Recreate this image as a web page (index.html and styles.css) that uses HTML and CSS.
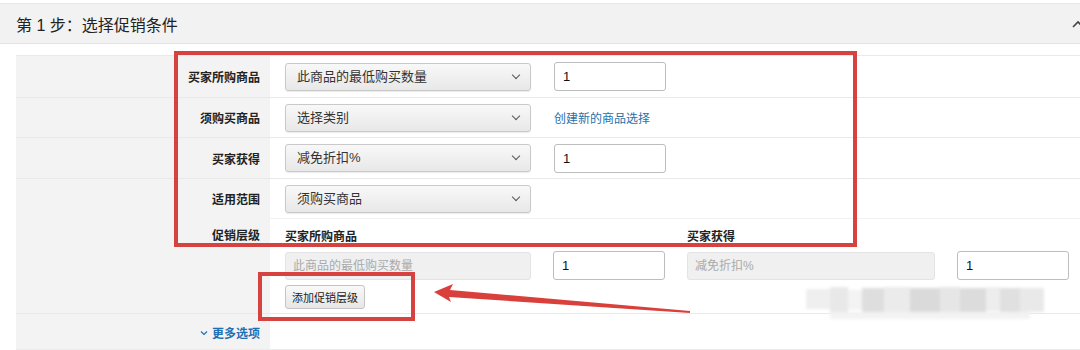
FILE: index.html
```html
<!DOCTYPE html>
<html lang="zh-CN">

<head>
    <meta charset="UTF-8">
    <meta name="viewport" content="width=device-width, initial-scale=1.0">
    <title>选择促销条件</title>
    <link rel="stylesheet" href="styles.css">
</head>

<body>
    <div class="step">
        <div class="step-head">
            <span>第 1 步：选择促销条件</span>
            <svg class="caret" width="12" height="10" viewBox="0 0 12 10">
                <path d="M1 8 L6 3 L11 8" fill="none" stroke="#444" stroke-width="1.6"/>
            </svg>
        </div>

        <div class="form">
            <div class="row r1">
                <div class="label">买家所购商品</div>
                <div class="field">
                    <div class="select">此商品的最低购买数量</div>
                    <div class="input">1</div>
                </div>
            </div>
            <div class="row r2">
                <div class="label">须购买商品</div>
                <div class="field">
                    <div class="select">选择类别</div>
                    <a class="link" href="#">创建新的商品选择</a>
                </div>
            </div>
            <div class="row r3">
                <div class="label">买家获得</div>
                <div class="field">
                    <div class="select">减免折扣%</div>
                    <div class="input">1</div>
                </div>
            </div>
            <div class="row r4">
                <div class="label">适用范围</div>
                <div class="field">
                    <div class="select">须购买商品</div>
                </div>
            </div>
            <div class="row r5">
                <div class="label top">促销层级</div>
                <div class="tiers">
                    <div class="tier-head">买家所购商品</div>
                    <div></div>
                    <div class="tier-head">买家获得</div>
                    <div></div>
                    <div class="disabled">此商品的最低购买数量</div>
                    <div class="input">1</div>
                    <div class="disabled">减免折扣%</div>
                    <div class="input">1</div>
                    <div class="btn-cell"><button class="btn">添加促销层级</button></div>
                </div>
            </div>
            <div class="row r6">
                <div class="label more">
                    <svg width="8" height="6" viewBox="0 0 8 6">
                        <path d="M1 1.5 L4 4.5 L7 1.5" fill="none" stroke="#1f6fb5" stroke-width="1.2"/>
                    </svg>
                    更多选项
                </div>
                <div class="field"></div>
            </div>
        </div>
    </div>

    <!-- annotations drawn on top of the screenshot -->
    <svg class="marks" width="1080" height="350" viewBox="0 0 1080 350">
        <defs>
            <filter id="soft"><feGaussianBlur stdDeviation="1.5"/></filter>
        </defs>
        <rect x="176" y="53" width="679" height="192" fill="none" stroke="#d5423f" stroke-width="4"/>
        <rect x="260" y="274" width="153" height="45" fill="none" stroke="#d5423f" stroke-width="4"/>
        <polygon points="434,292 453,284 450,290 690,311 690,313 449,297 451,302" fill="#d9403c"/>
        <g filter="url(#soft)">
            <rect x="806" y="289" width="24" height="20" fill="#efefef"/>
            <rect x="830" y="287" width="18" height="26" fill="#e8e8e8"/>
            <rect x="848" y="290" width="14" height="20" fill="#f3f3f3"/>
            <rect x="862" y="288" width="22" height="24" fill="#dedede"/>
            <rect x="884" y="287" width="26" height="26" fill="#ebebeb"/>
            <rect x="910" y="288" width="30" height="24" fill="#dadada"/>
            <rect x="940" y="287" width="20" height="26" fill="#e6e6e6"/>
            <rect x="960" y="288" width="26" height="24" fill="#dcdcdc"/>
            <rect x="986" y="287" width="14" height="24" fill="#ededed"/>
            <rect x="1000" y="288" width="20" height="24" fill="#e0e0e0"/>
            <rect x="1020" y="288" width="24" height="24" fill="#e9e9e9"/>
            <rect x="830" y="312" width="200" height="7" fill="#f3f3f3"/>
        </g>
    </svg>
</body>

</html>
```

FILE: styles.css
```css
body {
    margin: 0;
    font-family: "Liberation Sans", "Noto Sans CJK SC", sans-serif;
    color: #333;
    background: #fff;
    position: relative;
    width: 1080px;
    height: 350px;
    overflow: hidden;
}

.step-head {
    margin-top: 3px;
    height: 39px;
    background-color: #f2f2f2;
    border-top: 1px solid #e8e8e8;
    border-bottom: 1px solid #e2e2e2;
    display: flex;
    align-items: center;
    justify-content: space-between;
    padding-left: 16px;
    font-size: 16px;
    color: #222;
}

.caret {
    margin-right: -4px;
}

.form {
    margin-top: 11px;
    margin-left: 16px;
}

.row {
    display: grid;
    grid-template-columns: 254px 1fr;
    border-top: 1px solid #e9e9e9;
}

.r1 { height: 41px; }
.r2 { height: 39px; }
.r3 { height: 40px; }
.r4 { height: 39px; }
.r5 { height: 94px; border-top: 1px solid #f2f2f2; }
.r6 { height: 35px; border-bottom: 1px solid #ececec; }

.label {
    background-color: #f3f3f3;
    display: flex;
    align-items: center;
    justify-content: flex-end;
    padding-right: 10px;
    font-size: 12px;
    font-weight: bold;
    color: #222;
}

.label.top {
    align-items: flex-start;
    padding-top: 7px;
}

.label.more {
    color: #1f6fb5;
    gap: 4px;
    padding-top: 2px;
}

.field {
    display: flex;
    align-items: center;
    padding-left: 15px;
    gap: 23px;
}

.select {
    width: 246px;
    height: 28px;
    box-sizing: border-box;
    border: 1px solid #c9c9c9;
    border-radius: 3px;
    background: linear-gradient(#f8f8f8, #e8e8e8);
    box-shadow: 0 1px 1px rgba(0, 0, 0, 0.08);
    font-size: 13px;
    line-height: 26px;
    padding-left: 11px;
    position: relative;
    color: #333;
}

.select::after {
    content: "";
    position: absolute;
    right: 11px;
    top: 8px;
    width: 5px;
    height: 5px;
    border-right: 1.5px solid #555;
    border-bottom: 1.5px solid #555;
    transform: rotate(45deg);
}

.input {
    width: 112px;
    height: 29px;
    box-sizing: border-box;
    border: 1px solid #bdbdbd;
    border-radius: 3px;
    background: #fff;
    font-size: 13px;
    line-height: 27px;
    padding-left: 8px;
    color: #111;
}

.link {
    font-size: 12px;
    color: #2a70a8;
    text-decoration: none;
}

.tiers {
    display: grid;
    grid-template-columns: 246px 112px 248px 117px;
    grid-template-rows: 32px 29px 33px;
    column-gap: 22px;
    align-items: end;
    padding-left: 15px;
}

.tier-head {
    font-size: 12px;
    font-weight: bold;
    color: #222;
    align-self: center;
}

.disabled {
    height: 28px;
    box-sizing: border-box;
    border: 1px solid #e3e3e3;
    border-radius: 3px;
    background: #f0f0f0;
    font-size: 12px;
    line-height: 26px;
    padding-left: 7px;
    color: #aaa;
}

.btn-cell {
    grid-column: 1 / 3;
    align-self: center;
}

.btn {
    margin: 0;
    height: 24px;
    padding: 0 6px;
    font-family: inherit;
    font-size: 11px;
    color: #222;
    border: 1px solid #c4c4c4;
    border-radius: 3px;
    background: linear-gradient(#f9f9f9, #e6e6e6);
}

.marks {
    position: absolute;
    left: 0;
    top: 0;
    pointer-events: none;
}
```
